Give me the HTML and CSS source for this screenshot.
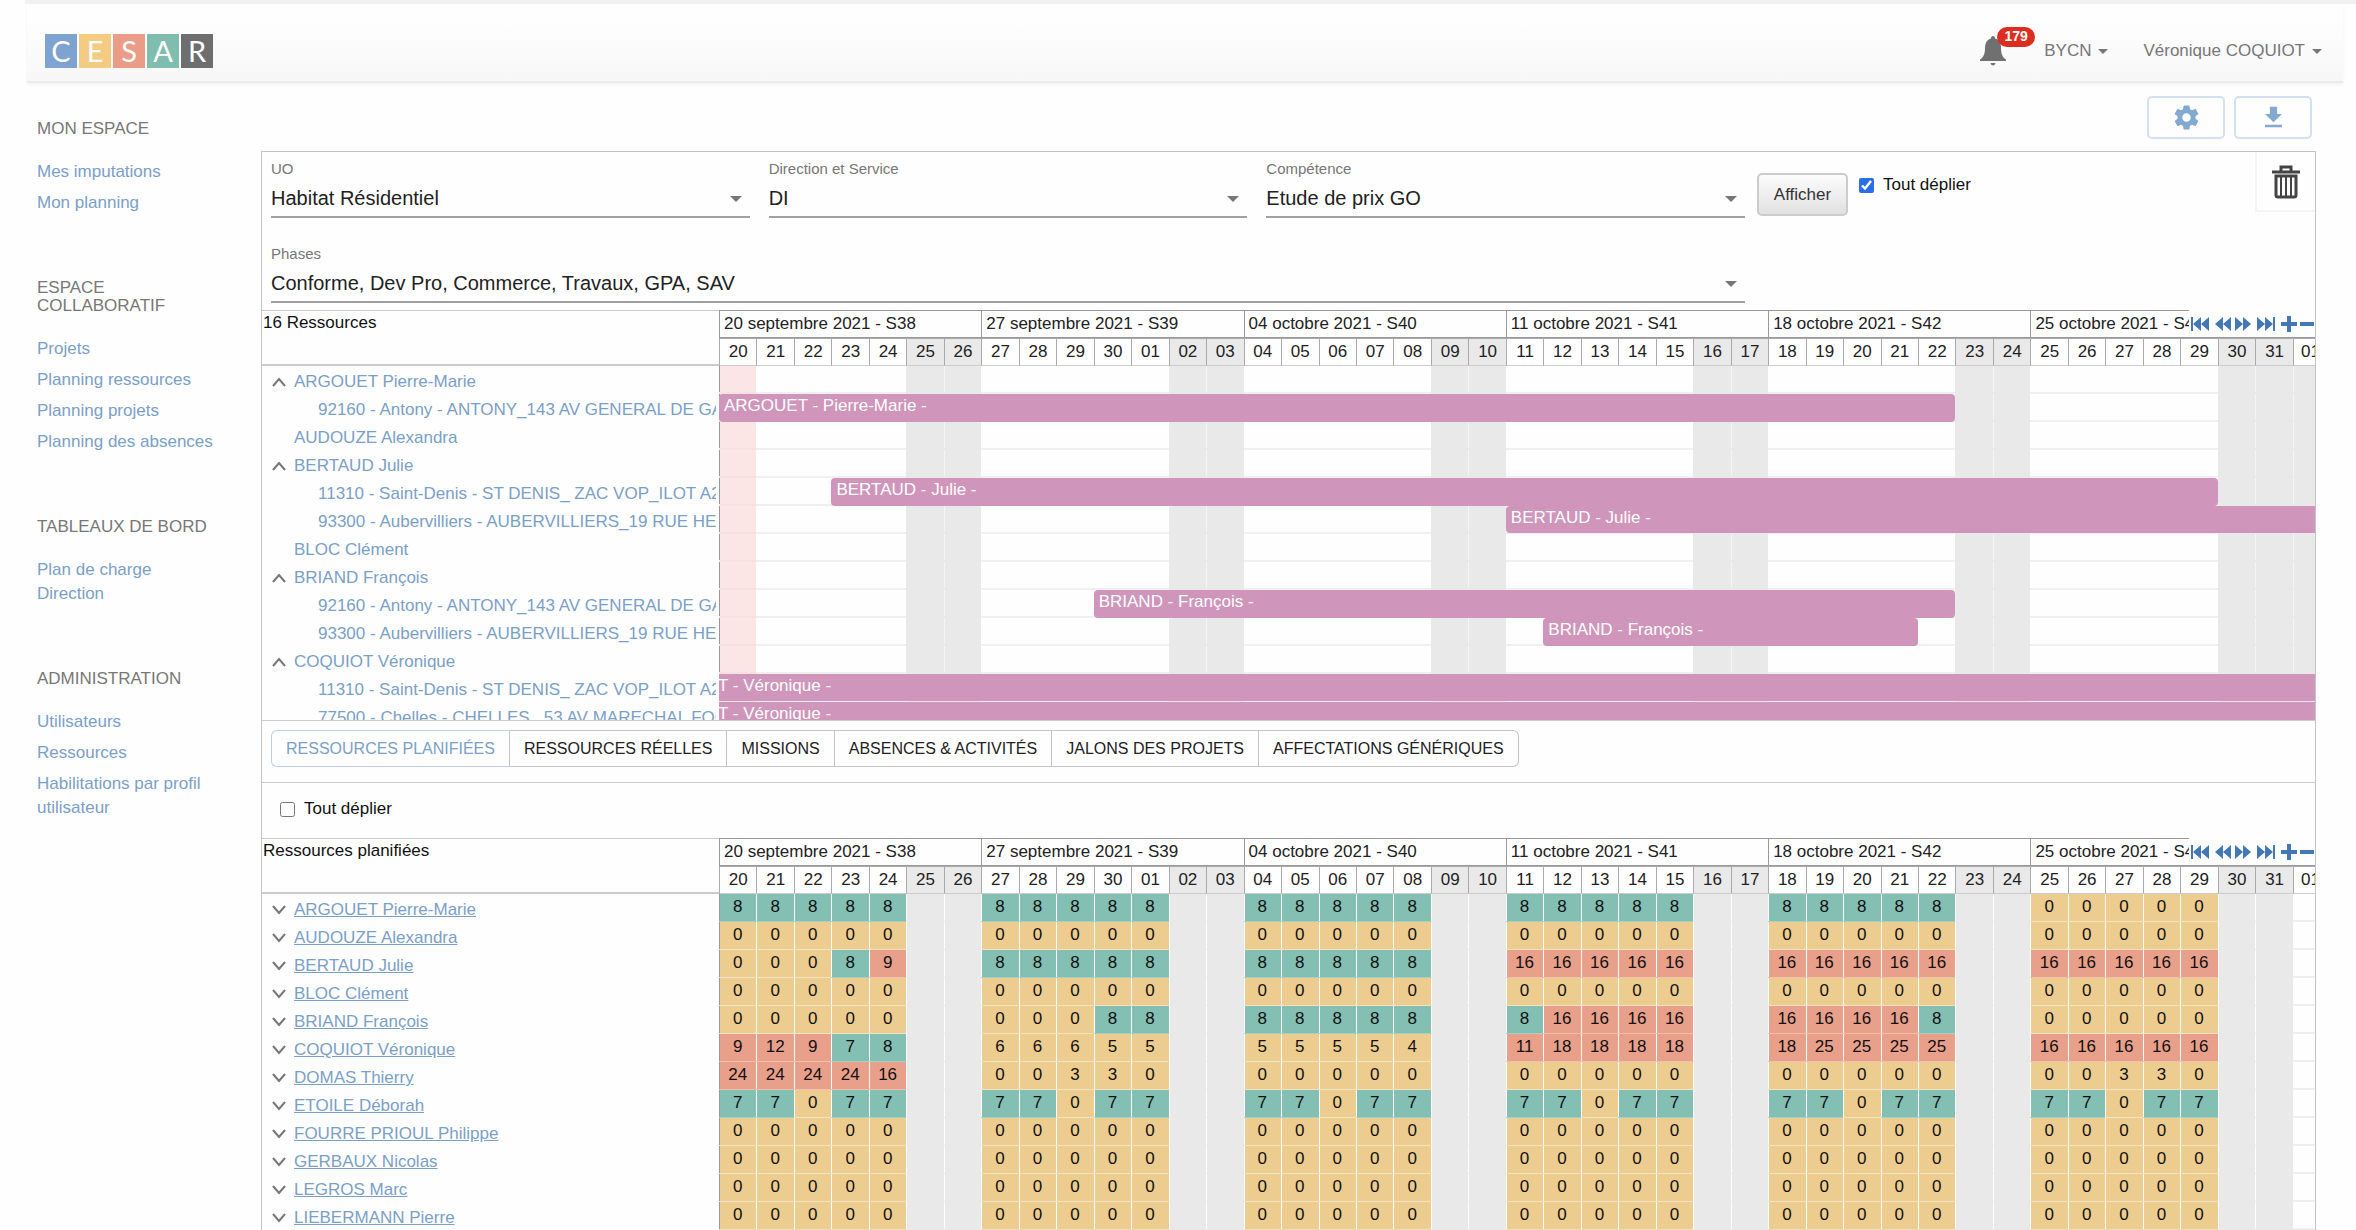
FILE: index.html
```html
<!DOCTYPE html>
<html lang="fr">
<head>
<meta charset="utf-8">
<title>CESAR - Planning ressources</title>
<link rel="stylesheet" href="styles.css">
</head>
<body>
<svg class="sprite" aria-hidden="true">
  <symbol id="i-step-back" viewBox="0 0 18 16"><path d="M0 1h2v14H0zM10 1v14L2 8zM18 1v14l-8-7z"/></symbol>
  <symbol id="i-back" viewBox="0 0 16 16"><path d="M8 1v14L0 8zM16 1v14L8 8z"/></symbol>
  <symbol id="i-next" viewBox="0 0 16 16"><path d="M0 1v14l8-7zM8 1v14l8-7z"/></symbol>
  <symbol id="i-step-next" viewBox="0 0 18 16"><path d="M16 1h2v14h-2zM0 1v14l8-7zM8 1v14l8-7z"/></symbol>
  <symbol id="i-plus" viewBox="0 0 16 16"><path d="M6 0h4v6h6v4h-6v6H6v-6H0V6h6z"/></symbol>
  <symbol id="i-minus" viewBox="0 0 14 16"><path d="M0 6h14v4H0z"/></symbol>
  <symbol id="i-up" viewBox="0 0 14 10"><path d="M1 9l6-7 6 7" fill="none" stroke="currentColor" stroke-width="2"/></symbol>
  <symbol id="i-down" viewBox="0 0 14 10"><path d="M1 1l6 7 6-7" fill="none" stroke="currentColor" stroke-width="2"/></symbol>
</svg>

<div class="strip"></div>
<header class="topbar">
  <a class="logo" href="#" aria-label="CESAR"><span class="blue">C</span><span class="yellow">E</span><span class="red">S</span><span class="green">A</span><span class="grey">R</span></a>
  <nav class="account">
    <button class="bell" aria-label="Notifications">
      <svg viewBox="0 0 26 30" width="26" height="30"><path d="M13 0c1.300 0 2 1 2 2.400 4 1 6 4.600 6 9.600 0 6 1.600 9.400 5 11.500V25H0v-1.500C3.400 21.400 5 18 5 12c0-5 2-8.600 6-9.600C11 1 11.700 0 13 0zM10.500 27h5c-.3 1.500-1.200 2.500-2.500 2.500s-2.200-1-2.500-2.500z"/></svg>
      <span class="badge">179</span>
    </button>
    <button class="menu org">BYCN</button>
    <button class="menu">Véronique COQUIOT</button>
  </nav>
</header>

<div class="page">
  <nav class="sidebar">
    <section>
      <h2>MON ESPACE</h2>
      <a href="#">Mes imputations</a>
      <a href="#">Mon planning</a>
    </section>
    <section>
      <h2>ESPACE COLLABORATIF</h2>
      <a href="#">Projets</a>
      <a href="#">Planning ressources</a>
      <a href="#">Planning projets</a>
      <a href="#">Planning des absences</a>
    </section>
    <section>
      <h2>TABLEAUX DE BORD</h2>
      <a href="#">Plan de charge Direction</a>
    </section>
    <section>
      <h2>ADMINISTRATION</h2>
      <a href="#">Utilisateurs</a>
      <a href="#">Ressources</a>
      <a href="#">Habilitations par profil utilisateur</a>
    </section>
  </nav>

  <main>
    <div class="tools">
      <button aria-label="Paramètres"><svg viewBox="0 0 24 24" width="29" height="29"><path d="M19.430 12.980c.04-.32.07-.64.07-.98s-.03-.66-.07-.98l2.110-1.650c.19-.15.24-.42.12-.64l-2-3.460c-.12-.22-.39-.3-.61-.22l-2.490 1c-.52-.4-1.080-.73-1.690-.98l-.38-2.650C14.460 2.180 14.250 2 14 2h-4c-.25 0-.46.18-.49.42l-.38 2.650c-.61.25-1.170.59-1.690.98l-2.490-1c-.23-.09-.49 0-.61.22l-2 3.460c-.13.22-.07.49.12.64l2.110 1.650c-.04.32-.07.65-.07.98s.03.66.07.98l-2.110 1.650c-.19.15-.24.42-.12.64l2 3.460c.12.22.39.3.61.22l2.490-1c.52.4 1.080.73 1.690.98l.38 2.650c.03.24.24.42.49.42h4c.25 0 .46-.18.49-.42l.38-2.650c.61-.25 1.170-.59 1.690-.98l2.490 1c.23.09.49 0 .61-.22l2-3.460c.12-.22.07-.49-.12-.64l-2.110-1.650zM12 15.500c-1.930 0-3.500-1.570-3.500-3.500s1.570-3.500 3.500-3.500 3.500 1.570 3.500 3.500-1.570 3.500-3.500 3.500z"/></svg></button>
      <button aria-label="Télécharger"><svg viewBox="0 0 24 24" width="29" height="29"><path d="M19 9h-4V3H9v6H5l7 7 7-7zM5 18v2h14v-2H5z"/></svg></button>
    </div>

    <div class="panel">
      <form class="filters">
        <div class="fields">
          <div class="field"><label for="uo">UO</label><select id="uo"><option>Habitat Résidentiel</option></select></div>
          <div class="field"><label for="dir">Direction et Service</label><select id="dir"><option>DI</option></select></div>
          <div class="field"><label for="comp">Compétence</label><select id="comp"><option>Etude de prix GO</option></select></div>
          <div class="field wide"><label for="phases">Phases</label><select id="phases"><option>Conforme, Dev Pro, Commerce, Travaux, GPA, SAV</option></select></div>
        </div>
        <div class="actions">
          <button type="button" class="show">Afficher</button>
          <label class="check"><input type="checkbox" checked>Tout déplier</label>
          <button type="button" class="trash" aria-label="Supprimer"><svg viewBox="0 0 28 34" width="28" height="34"><g fill="none" stroke="currentColor"><path d="M9 6V2h10v4" stroke-width="3"/><path d="M0 7h28" stroke-width="3"/><path d="M4 11v19q0 2 2 2h16q2 0 2-2V11z" stroke-width="3"/><path d="M9 11v20M14 11v20M19 11v20" stroke-width="2"/></g></svg></button>
        </div>
      </form>

      <div class="planner gantt">
        <table id="gantt"></table>
        <div class="nav"></div>
      </div>

      <div class="tabs">
        <button class="active">RESSOURCES PLANIFIÉES</button><button>RESSOURCES RÉELLES</button><button>MISSIONS</button><button>ABSENCES &amp; ACTIVITÉS</button><button>JALONS DES PROJETS</button><button>AFFECTATIONS GÉNÉRIQUES</button>
      </div>

      <div class="expand"><label class="check"><input type="checkbox">Tout déplier</label></div>

      <div class="planner load">
        <table id="load"></table>
        <div class="nav"></div>
      </div>
    </div>
  </main>
</div>
<script src="app.js"></script>
</body>
</html>
```
FILE: styles.css
```css
* { box-sizing: border-box; }

body {
  margin: 0;
  height: 100vh;
  display: flex;
  flex-direction: column;
  overflow: hidden;
  background: #fefefe;
  color: #222;
  font: 17px/24px "Liberation Sans", Arial, sans-serif;
}

button, select, input { font: inherit; color: inherit; margin: 0; }
button { background: none; border: 0; padding: 0; }
a { color: #7aa0c8; text-decoration: none; }
svg { fill: currentColor; }
.sprite { display: none; }

.strip { flex: none; height: 4px; margin-left: 25px; background: #f1f1f1; }

/* Top bar */
.topbar {
  flex: none;
  display: flex;
  justify-content: space-between;
  align-items: center;
  height: 79px;
  margin: 0 13px 0 27px;
  padding: 17px 21px 0 18px;
  background: linear-gradient(#fefefe 20%, #f7f7f7);
  border-bottom: 2px solid #ebebeb;
  box-shadow: 0 2px 3px #f4f4f4;
}
.logo { display: flex; gap: 2px; }
.logo span {
  width: 32px;
  height: 34px;
  color: #fff;
  font: 29px/34px Lato, sans-serif;
  text-align: center;
}
.blue { background: #7fa3d0; }
.yellow { background: #f3cb82; }
.red { background: #ea9c86; }
.green { background: #7fbdae; }
.grey { background: #6e6e6e; }

.account { display: flex; align-items: center; color: #777; }
.bell { position: relative; width: 26px; height: 30px; margin-right: 38px; color: #707070; }
.bell svg { display: block; }
.badge {
  position: absolute;
  left: 17px;
  top: -9px;
  width: 38px;
  height: 20px;
  border-radius: 10px;
  background: #dd2c20;
  color: #fff;
  font-size: 14px;
  font-weight: bold;
  line-height: 19px;
}
.menu { display: flex; align-items: center; gap: 7px; }
.menu::after { content: ""; border: 5px solid transparent; border-top-color: #777; border-bottom: 0; }
.org { margin-right: 35px; }

/* Page columns */
.page { flex: 1; display: flex; min-height: 0; }
.sidebar { flex: none; width: 261px; padding: 37px 44px 0 37px; }
.sidebar section { display: flex; flex-direction: column; gap: 7px; margin-bottom: 64px; }
.sidebar h2 { margin: 0 0 15px; color: #777; font-size: 17px; font-weight: normal; line-height: 18px; }
main { flex: 1; display: flex; flex-direction: column; min-width: 0; padding-right: 40px; }

.tools { display: flex; justify-content: flex-end; gap: 9px; padding: 13px 4px 12px 0; }
.tools button {
  width: 78px;
  height: 43px;
  border: 2px solid #d3e0f0;
  border-radius: 5px;
  color: #83a9d0;
}
.tools svg { display: block; margin: auto; }

.panel { flex: 1; min-height: 0; border: 1px solid #c4c4c4; border-bottom: 0; overflow: hidden; }

/* Filters */
.filters { display: flex; gap: 12px; padding-left: 9px; }
.fields {
  flex: 1;
  display: grid;
  grid-template-columns: repeat(3, 1fr);
  gap: 27px 19px;
  padding: 8px 0 7px;
}
.field { position: relative; display: flex; flex-direction: column; gap: 1px; }
.field label { color: #777; font-size: 15px; line-height: 18px; }
.field select {
  appearance: none;
  width: 100%;
  height: 39px;
  padding: 0;
  border: 0;
  border-bottom: 2px solid #a0a0a0;
  border-radius: 0;
  background: none;
  font-size: 20px;
}
.field::after {
  content: "";
  position: absolute;
  right: 8px;
  bottom: 16px;
  border: 6px solid transparent;
  border-top-color: #777;
  border-bottom: 0;
}
.wide { grid-column: 1 / -1; }
.actions { display: flex; align-items: flex-start; width: 558px; }
.show {
  width: 91px;
  height: 43px;
  margin-top: 21px;
  border: 2px solid #ccc;
  border-radius: 5px;
  background: linear-gradient(#fcfcfc, #e1e1e1);
  color: #333;
}
.check { display: flex; align-items: center; gap: 9px; color: #111; }
.check input { width: 15px; height: 15px; accent-color: #2a6fe8; }
.actions .check { margin: 21px auto 0 11px; }
.trash {
  display: flex;
  justify-content: center;
  padding-top: 13px;
  width: 60px;
  height: 60px;
  border: solid #f4f4f4;
  border-width: 0 0 2px 2px;
  color: #444;
}

/* Planners */
.planner { position: relative; overflow: hidden; }
.gantt { height: 410px; }
.planner table { width: 100%; table-layout: fixed; border-collapse: separate; border-spacing: 0; }
.planner th, .planner td { padding: 0; font-weight: normal; white-space: nowrap; }
.names { width: 457px; }
.partial { width: 22px; }

thead tr { height: 28px; line-height: 24px; }
thead .title {
  padding: 0 1px;
  border: solid #ccc;
  border-width: 1px 0 2px;
  text-align: left;
  vertical-align: top;
  color: #111;
}
thead .week {
  padding-left: 4px;
  border: solid #999;
  border-width: 1px 0 1px 1px;
  text-align: left;
  overflow: hidden;
}
thead .day {
  border: solid #aaa;
  border-width: 1px 0 1px 1px;
  border-bottom-color: #ccc;
  overflow: hidden;
}
thead .day:last-child { padding-left: 7px; text-align: left; }
.off { background: #e9e9e9; }

tbody tr { height: 28px; }
tbody tr:nth-child(6n) { height: 27px; }
tbody th {
  position: relative;
  z-index: 2;
  background: #fefefe;
  text-align: left;
}
.name { display: flex; align-items: center; gap: 8px; height: 24px; margin: 4px 3px 0 10px; overflow: hidden; }
.name svg { flex: none; width: 14px; height: 10px; color: #777; }
.name.leaf { margin-left: 32px; }
.name.child { margin-left: 56px; }
tbody td { position: relative; box-shadow: inset 1px 0 #fefefe; }
tbody td:nth-child(2) { box-shadow: inset 1px 0 #999; }

.gantt tbody td { border-bottom: 2px solid #f0f0f0; }
.gantt tbody td.off { border-bottom-color: #e9e9e9; box-shadow: none; }
.gantt tbody td.off + td.off { box-shadow: inset 1px 0 #f4f4f4; }
.gantt tbody td.today { background: #fbe6e5; border-bottom-color: #f5e1e0; }
.bar {
  position: absolute;
  z-index: 1;
  left: 0;
  top: 0;
  bottom: -2px;
  padding-left: 5px;
  border-radius: 4px;
  background: #cf95ba;
  color: #fff;
  line-height: 24px;
}
tr:nth-child(6n) .bar { bottom: -1px; }

.load .name a { text-decoration: underline; }
.load tbody td { padding-bottom: 1px; border-bottom: 1px solid #f3e2c0; text-align: center; line-height: 24px; color: #111; }
.load tbody td.ok { background: #83bfb2; border-bottom-color: #a5d0c6; }
.load tbody td.low { background: #eccc8f; }
.load tbody td.high { background: #e9a08a; border-bottom-color: #f0bfb0; }
.load tbody td.off { border-bottom-color: #e9e9e9; }
.load tbody td.none { border-bottom: 2px solid #eee; }

.nav {
  position: absolute;
  z-index: 3;
  right: 0;
  top: 0;
  display: flex;
  align-items: center;
  width: 126px;
  height: 27px;
  padding-left: 2px;
  background: #fefefe;
  color: #4478b4;
}
.nav svg { display: block; height: 16px; }
.nav button { margin-right: 6px; }
.nav button:nth-child(2) { margin-right: 4px; }
.nav button:nth-child(5) { margin-right: 3px; }

/* Tabs */
.tabs { display: flex; padding: 9px 9px 15px; border: solid #ccc; border-width: 1px 0; }
.tabs button {
  height: 37px;
  padding: 0 14px;
  border: solid #c4c4c4;
  border-width: 1px 1px 1px 0;
  font-size: 16px;
}
.tabs button:first-child { border-left-width: 1px; border-radius: 6px 0 0 6px; }
.tabs button:last-child { border-radius: 0 6px 6px 0; }
.tabs .active { border-color: #bfd0e6 #c4c4c4 #bfd0e6 #bfd0e6; color: #7aa0c8; }

.expand { padding: 14px 18px 17px; }
```
FILE: app.js
```js
const WEEKS = [
  "20 septembre 2021 - S38", "27 septembre 2021 - S39", "04 octobre 2021 - S40",
  "11 octobre 2021 - S41", "18 octobre 2021 - S42", "25 octobre 2021 - S43",
];
const DAY_COUNT = 43;
const FIRST_DAY = Date.UTC(2021, 8, 20);

const dayLabel = (i) => String(new Date(FIRST_DAY + i * 864e5).getUTCDate()).padStart(2, "0");
const isWeekend = (i) => i % 7 > 4;
const icon = (id, width = 14) => `<svg width="${width}"><use href="#i-${id}"/></svg>`;
const days = (render) => Array.from({ length: DAY_COUNT }, (_, i) => render(i)).join("");

function head(title) {
  return `<colgroup><col class="names">${days((i) => (i === DAY_COUNT - 1 ? '<col class="partial">' : "<col>"))}</colgroup>
    <thead><tr><th class="title" rowspan="2">${title}</th>
    ${WEEKS.map((w) => `<th class="week" colspan="7">${w}</th>`).join("")}<th class="week"></th></tr>
    <tr>${days((i) => `<th class="day${isWeekend(i) ? " off" : ""}">${dayLabel(i)}</th>`)}</tr></thead>`;
}

// kind, label, then the bar: first day, number of days, text
const GANTT = [
  ["open", "ARGOUET Pierre-Marie"],
  ["child", "92160 - Antony - ANTONY_143 AV GENERAL DE GAULLE", 0, 33, "ARGOUET - Pierre-Marie -"],
  ["leaf", "AUDOUZE Alexandra"],
  ["open", "BERTAUD Julie"],
  ["child", "11310 - Saint-Denis - ST DENIS_ ZAC VOP_ILOT A2", 3, 37, "BERTAUD - Julie -"],
  ["child", "93300 - Aubervilliers - AUBERVILLIERS_19 RUE HE", 21, 24, "BERTAUD - Julie -"],
  ["leaf", "BLOC Clément"],
  ["open", "BRIAND François"],
  ["child", "92160 - Antony - ANTONY_143 AV GENERAL DE GAULLE", 10, 23, "BRIAND - François -"],
  ["child", "93300 - Aubervilliers - AUBERVILLIERS_19 RUE HE", 22, 10, "BRIAND - François -"],
  ["open", "COQUIOT Véronique"],
  ["child", "11310 - Saint-Denis - ST DENIS_ ZAC VOP_ILOT A2", -2, 47, "COQUIOT - Véronique -"],
  ["child", "77500 - Chelles - CHELLES_ 53 AV MARECHAL FOCH", -2, 47, "COQUIOT - Véronique -"],
];

function ganttRow([kind, label, start, length, text]) {
  const anchor = Math.max(start, 0);
  const cells = days((i) => {
    const cls = i === 0 ? "today" : isWeekend(i) || i === 42 ? "off" : "";
    const bar = i === anchor
      ? `<div class="bar" style="left:${(start - anchor) * 100}%;width:${length * 100}%">${text}</div>` : "";
    return `<td class="${cls}">${bar}</td>`;
  });
  return `<tr><th><div class="name ${kind}">${kind === "open" ? icon("up") : ""}<a href="#">${label}</a></div></th>${cells}</tr>`;
}

document.getElementById("gantt").innerHTML =
  head("16 Ressources") + `<tbody>${GANTT.map(ganttRow).join("")}</tbody>`;

// Hours per working day, one group per week
const ZERO = "0 0 0 0 0";
const EIGHT = "8 8 8 8 8";
const SIXTEEN = "16 16 16 16 16";
const idle = Array(6).fill(ZERO);
const LOAD = [
  ["ARGOUET Pierre-Marie", EIGHT, EIGHT, EIGHT, EIGHT, EIGHT, ZERO],
  ["AUDOUZE Alexandra", ...idle],
  ["BERTAUD Julie", "0 0 0 8 9", EIGHT, EIGHT, SIXTEEN, SIXTEEN, SIXTEEN],
  ["BLOC Clément", ...idle],
  ["BRIAND François", ZERO, "0 0 0 8 8", EIGHT, "8 16 16 16 16", "16 16 16 16 8", ZERO],
  ["COQUIOT Véronique", "9 12 9 7 8", "6 6 6 5 5", "5 5 5 5 4", "11 18 18 18 18", "18 25 25 25 25", SIXTEEN],
  ["DOMAS Thierry", "24 24 24 24 16", "0 0 3 3 0", ZERO, ZERO, ZERO, "0 0 3 3 0"],
  ["ETOILE Déborah", ...Array(6).fill("7 7 0 7 7")],
  ["FOURRE PRIOUL Philippe", ...idle],
  ["GERBAUX Nicolas", ...idle],
  ["LEGROS Marc", ...idle],
  ["LIEBERMANN Pierre", ...idle],
  [""],
];

function loadRow([name, ...weeks]) {
  const hours = weeks.map((w) => w.split(" "));
  const cells = days((i) => {
    if (isWeekend(i)) return '<td class="off"></td>';
    if (i === 42) return '<td class="none"></td>';
    const value = hours.length ? hours[Math.floor(i / 7)][i % 7] : "";
    const cls = value > 8 ? "high" : value > 6 ? "ok" : "low";
    return `<td class="${cls}">${value}</td>`;
  });
  const label = name ? `<div class="name">${icon("down")}<a href="#">${name}</a></div>` : "";
  return `<tr><th>${label}</th>${cells}</tr>`;
}

document.getElementById("load").innerHTML =
  head("Ressources planifiées") + `<tbody>${LOAD.map(loadRow).join("")}</tbody>`;

const NAV = [
  ["step-back", 18, "Début"], ["back", 16, "Précédent"], ["next", 16, "Suivant"],
  ["step-next", 18, "Fin"], ["plus", 16, "Zoom avant"], ["minus", 14, "Zoom arrière"],
];
document.querySelectorAll(".nav").forEach((nav) => {
  nav.innerHTML = NAV.map(([id, w, label]) => `<button aria-label="${label}">${icon(id, w)}</button>`).join("");
});
```
